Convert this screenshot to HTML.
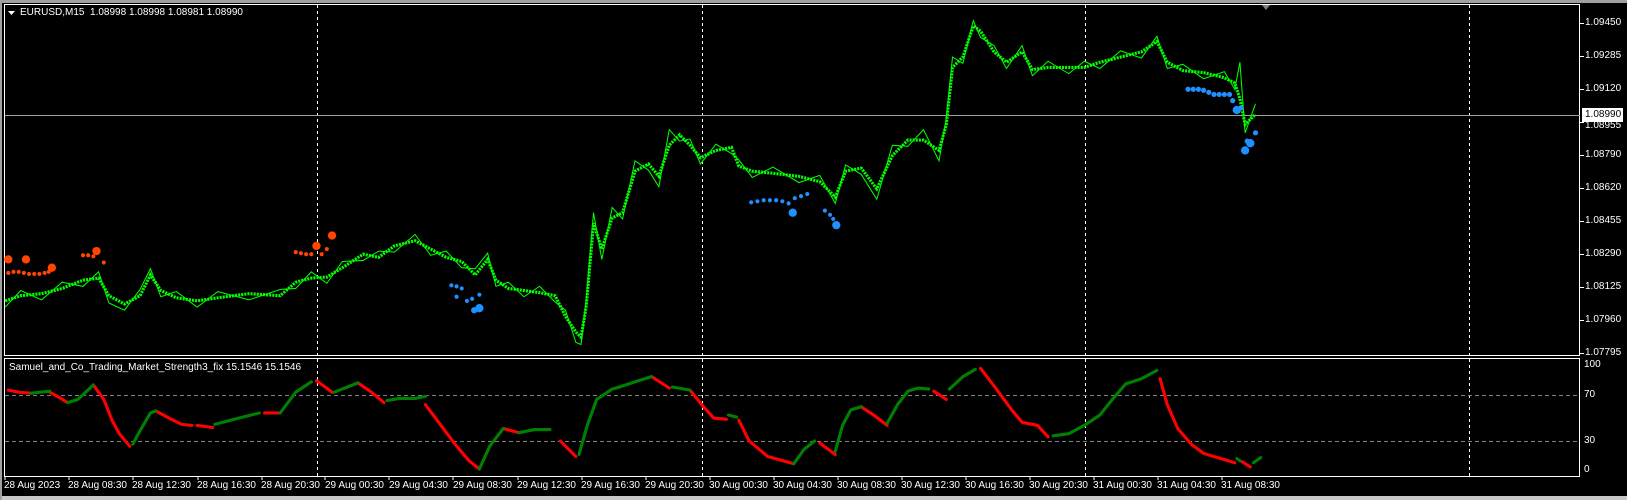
<!DOCTYPE html>
<html><head><meta charset="utf-8"><style>
html,body{margin:0;padding:0;background:#000;width:1627px;height:500px;overflow:hidden;position:relative;font-family:"Liberation Sans",Arial,sans-serif;font-size:10px;color:#fff}
.t{position:absolute;white-space:nowrap;line-height:12px}
svg{position:absolute;left:0;top:0}
</style></head><body>
<svg width="1627" height="500" viewBox="0 0 1627 500">
<rect x="0" y="0" width="1627" height="3" fill="#a0a0a0"/>
<rect x="0" y="496" width="1627" height="4" fill="#c8c8c8"/>
<rect x="0" y="0" width="2" height="500" fill="#a0a0a0"/>
<rect x="4.5" y="4.5" width="1575" height="351" fill="none" stroke="#fff" stroke-width="1"/>
<rect x="4.5" y="358.5" width="1575" height="118" fill="none" stroke="#fff" stroke-width="1"/>
<g stroke="#fff" stroke-dasharray="3,3" stroke-width="1">
<line x1="317.5" y1="5" x2="317.5" y2="476"/><line x1="702.5" y1="5" x2="702.5" y2="476"/>
<line x1="1085.5" y1="5" x2="1085.5" y2="476"/><line x1="1469.5" y1="5" x2="1469.5" y2="476"/>
</g>
<g stroke="#808080" stroke-dasharray="4,3">
<line x1="5" y1="395.5" x2="1579" y2="395.5"/><line x1="5" y1="441.5" x2="1579" y2="441.5"/>
</g>
<line x1="5" y1="115.5" x2="1580" y2="115.5" stroke="#a0a0a0"/>
<g stroke="#fff"><line x1="1580" y1="23.5" x2="1584" y2="23.5"/><line x1="1580" y1="56.5" x2="1584" y2="56.5"/><line x1="1580" y1="89.5" x2="1584" y2="89.5"/><line x1="1580" y1="122.5" x2="1584" y2="122.5"/><line x1="1580" y1="155.5" x2="1584" y2="155.5"/><line x1="1580" y1="188.5" x2="1584" y2="188.5"/><line x1="1580" y1="221.5" x2="1584" y2="221.5"/><line x1="1580" y1="254.5" x2="1584" y2="254.5"/><line x1="1580" y1="287.5" x2="1584" y2="287.5"/><line x1="1580" y1="320.5" x2="1584" y2="320.5"/><line x1="1580" y1="353.5" x2="1584" y2="353.5"/></g>
<polygon points="1262,5 1270,5 1266,10" fill="#808080"/>
<g transform="scale(1.0376)">
<polyline fill="none" stroke="#00ff00" stroke-width="3" stroke-dasharray="2,1" points="5,290 20,285 40,283 60,278 80,270 95,268 105,285 120,293 135,285 145,265 155,280 170,287 190,290 210,287 240,283 270,285 285,272 300,268 315,267 330,258 350,245 365,248 380,237 400,232 415,240 430,248 445,252 458,265 470,250 478,270 490,278 505,280 520,282 535,285 545,305 555,320 560,325 565,295 572,215 580,240 590,210 600,205 612,165 625,158 635,170 645,140 655,130 665,140 675,152 690,145 705,142 712,160 725,165 745,167 770,170 790,175 805,190 815,165 830,162 845,182 860,150 875,135 890,135 905,145 912,120 918,65 928,55 938,25 945,30 958,50 970,60 985,50 995,67 1010,65 1030,65 1045,65 1060,60 1080,55 1100,50 1115,40 1125,60 1140,68 1160,70 1180,75 1190,80 1195,95 1200,120 1210,110"/>
<polyline fill="none" stroke="#00ff00" stroke-width="1" points="5,296 20,280 40,289 60,272 80,276 95,262 105,292 120,299 135,279 145,259 155,286 170,281 190,296 210,281 240,289 270,279 285,278 300,262 315,273 330,252 350,251 365,242 380,243 400,226 415,246 430,242 445,258 458,259 470,244 478,276 490,272 505,286 520,276 535,291 545,299 555,330 560,332 565,289 572,205 580,250 590,200 600,211 612,155 625,164 635,180 645,125 655,136 665,134 675,158 690,139 705,148 712,154 725,171 745,161 770,176 790,169 805,196 815,159 830,168 845,192 860,140 875,141 890,125 905,155 912,114 918,55 928,61 938,20 945,36 958,44 970,66 985,44 995,73 1010,59 1030,71 1045,59 1060,66 1080,49 1100,56 1115,35 1125,66 1140,62 1160,76 1180,69 1190,86 1195,60 1200,128 1210,100"/>
<g fill="#ff4500">
<circle cx="8" cy="250" r="4"/><circle cx="25" cy="250" r="4"/><circle cx="50" cy="258" r="4"/><circle cx="93" cy="242" r="4"/><circle cx="305" cy="237" r="4"/><circle cx="320" cy="227" r="4"/>
<circle cx="8" cy="263" r="2"/><circle cx="13" cy="262" r="2"/><circle cx="18" cy="262" r="2"/><circle cx="23" cy="263" r="2"/><circle cx="28" cy="264" r="2"/><circle cx="33" cy="264" r="2"/><circle cx="38" cy="264" r="2"/><circle cx="43" cy="263" r="2"/><circle cx="47" cy="262" r="2"/>
<circle cx="80" cy="246" r="2"/><circle cx="85" cy="246" r="2"/><circle cx="90" cy="247" r="2"/><circle cx="100" cy="253" r="2"/>
<circle cx="285" cy="243" r="2"/><circle cx="290" cy="244" r="2"/><circle cx="295" cy="245" r="2"/><circle cx="300" cy="245" r="2"/><circle cx="310" cy="245" r="2"/><circle cx="315" cy="240" r="2"/>
</g>
<g fill="#1e90ff">
<circle cx="435" cy="275" r="2"/><circle cx="440" cy="276" r="2"/><circle cx="445" cy="278" r="2"/><circle cx="440" cy="286" r="2"/><circle cx="450" cy="290" r="2"/><circle cx="455" cy="288" r="2"/><circle cx="462" cy="284" r="2"/><circle cx="457" cy="299" r="3"/><circle cx="462" cy="297" r="4"/>
<circle cx="724" cy="195" r="2"/><circle cx="730" cy="194" r="2"/><circle cx="736" cy="193" r="2"/><circle cx="742" cy="193" r="2"/><circle cx="748" cy="193" r="2"/><circle cx="754" cy="194" r="2"/><circle cx="760" cy="196" r="2"/><circle cx="766" cy="191" r="2"/><circle cx="772" cy="189" r="2"/><circle cx="778" cy="187" r="2"/><circle cx="764" cy="205" r="4"/>
<circle cx="795" cy="203" r="2"/><circle cx="800" cy="207" r="2"/><circle cx="803" cy="211" r="2"/><circle cx="806" cy="217" r="4"/>
<circle cx="1145" cy="86" r="2.5"/><circle cx="1150" cy="86" r="2.5"/><circle cx="1155" cy="86" r="2.5"/><circle cx="1160" cy="87" r="2.5"/><circle cx="1165" cy="89" r="2.5"/><circle cx="1170" cy="91" r="2.5"/><circle cx="1175" cy="91" r="2.5"/><circle cx="1180" cy="91" r="2.5"/><circle cx="1185" cy="91" r="2.5"/><circle cx="1188" cy="97" r="2.5"/><circle cx="1192" cy="106" r="4"/><circle cx="1196" cy="104" r="2.5"/>
<circle cx="1200" cy="145" r="4"/><circle cx="1205" cy="138" r="4"/><circle cx="1210" cy="128" r="2.5"/><circle cx="1202" cy="136" r="2.5"/>
</g>
<g fill="none" stroke-width="3" stroke-linecap="round" stroke-linejoin="round">
<g stroke="#ff0000">
<polyline points="8,376 18,378 30,379"/><polyline points="48,378 57,383 65,388"/><polyline points="90,371 100,385 108,405 115,418 125,430"/><polyline points="150,396 165,404 175,409 185,410"/><polyline points="190,410 205,412"/><polyline points="255,398 268,398"/><polyline points="305,367 312,372 320,378"/><polyline points="345,369 358,378 370,388"/><polyline points="410,390 425,410 440,430 452,444 462,452"/><polyline points="485,413 500,417"/><polyline points="540,425 555,440"/><polyline points="628,363 645,374"/><polyline points="665,376 678,392 688,403 700,404"/><polyline points="712,405 722,425 740,440 765,447"/><polyline points="790,427 805,438"/><polyline points="830,392 842,400 855,410"/><polyline points="900,377 912,385"/><polyline points="945,355 958,372 975,395 985,407 1000,410 1010,421"/><polyline points="1118,365 1125,390 1135,413 1148,428 1160,437 1180,443 1190,446"/><polyline points="1197,445 1205,450"/>
</g>
<g stroke="#008000">
<polyline points="30,379 48,377"/><polyline points="65,388 75,385 90,371"/><polyline points="128,428 135,415 145,398 150,396"/><polyline points="207,409 230,403 250,398"/><polyline points="270,398 285,378 300,368"/><polyline points="322,378 345,369"/><polyline points="373,386 385,384 400,384 410,382"/><polyline points="462,452 472,430 485,413"/><polyline points="500,417 515,414 530,414"/><polyline points="558,438 566,410 575,385 590,375 600,372 615,367 628,363"/><polyline points="648,373 665,376"/><polyline points="702,400 710,402"/><polyline points="765,447 775,433 785,425"/><polyline points="805,435 812,410 820,395 830,392"/><polyline points="855,408 865,390 875,377 885,374 895,375"/><polyline points="915,375 928,363 940,356"/><polyline points="1015,420 1030,418 1045,410 1060,400 1072,385 1085,370 1100,365 1115,357"/><polyline points="1192,442 1195,444"/><polyline points="1208,446 1215,441"/>
</g></g>
</g>
<rect x="1582" y="108" width="41" height="14" fill="#fff"/>
<g stroke="#fff">
<line x1="5" y1="476" x2="5" y2="480"/><line x1="69" y1="476" x2="69" y2="480"/><line x1="133" y1="476" x2="133" y2="480"/><line x1="198" y1="476" x2="198" y2="480"/><line x1="262" y1="476" x2="262" y2="480"/><line x1="325" y1="476" x2="325" y2="480"/><line x1="389" y1="476" x2="389" y2="480"/><line x1="453" y1="476" x2="453" y2="480"/><line x1="518" y1="476" x2="518" y2="480"/><line x1="582" y1="476" x2="582" y2="480"/><line x1="646" y1="476" x2="646" y2="480"/><line x1="710" y1="476" x2="710" y2="480"/><line x1="774" y1="476" x2="774" y2="480"/><line x1="838" y1="476" x2="838" y2="480"/><line x1="902" y1="476" x2="902" y2="480"/><line x1="966" y1="476" x2="966" y2="480"/><line x1="1030" y1="476" x2="1030" y2="480"/><line x1="1094" y1="476" x2="1094" y2="480"/><line x1="1158" y1="476" x2="1158" y2="480"/><line x1="1222" y1="476" x2="1222" y2="480"/>
</g>
<polygon points="8,11 15,11 11.5,15" fill="#fff"/>
</svg>
<div class="t" style="left:20px;top:7px">EURUSD,M15&nbsp; 1.08998 1.08998 1.08981 1.08990</div>
<div class="t" style="left:9px;top:362px">Samuel_and_Co_Trading_Market_Strength3_fix 15.1546 15.1546</div>
<div class="t" style="left:1585px;top:17px">1.09450</div>
<div class="t" style="left:1585px;top:50px">1.09285</div>
<div class="t" style="left:1585px;top:83px">1.09120</div>
<div class="t" style="left:1585px;top:120px">1.08955</div>
<div class="t" style="left:1585px;top:109px;color:#000">1.08990</div>
<div class="t" style="left:1585px;top:149px">1.08790</div>
<div class="t" style="left:1585px;top:182px">1.08620</div>
<div class="t" style="left:1585px;top:215px">1.08455</div>
<div class="t" style="left:1585px;top:248px">1.08290</div>
<div class="t" style="left:1585px;top:281px">1.08125</div>
<div class="t" style="left:1585px;top:314px">1.07960</div>
<div class="t" style="left:1585px;top:347px">1.07795</div>
<div class="t" style="left:1584px;top:359px">100</div>
<div class="t" style="left:1584px;top:389px">70</div>
<div class="t" style="left:1584px;top:435px">30</div>
<div class="t" style="left:1584px;top:464px">0</div>
<div class="t" style="left:4px;top:480px">28 Aug 2023</div>
<div class="t" style="left:68px;top:480px">28 Aug 08:30</div>
<div class="t" style="left:132px;top:480px">28 Aug 12:30</div>
<div class="t" style="left:197px;top:480px">28 Aug 16:30</div>
<div class="t" style="left:261px;top:480px">28 Aug 20:30</div>
<div class="t" style="left:325px;top:480px">29 Aug 00:30</div>
<div class="t" style="left:389px;top:480px">29 Aug 04:30</div>
<div class="t" style="left:453px;top:480px">29 Aug 08:30</div>
<div class="t" style="left:517px;top:480px">29 Aug 12:30</div>
<div class="t" style="left:581px;top:480px">29 Aug 16:30</div>
<div class="t" style="left:645px;top:480px">29 Aug 20:30</div>
<div class="t" style="left:709px;top:480px">30 Aug 00:30</div>
<div class="t" style="left:773px;top:480px">30 Aug 04:30</div>
<div class="t" style="left:837px;top:480px">30 Aug 08:30</div>
<div class="t" style="left:901px;top:480px">30 Aug 12:30</div>
<div class="t" style="left:965px;top:480px">30 Aug 16:30</div>
<div class="t" style="left:1029px;top:480px">30 Aug 20:30</div>
<div class="t" style="left:1093px;top:480px">31 Aug 00:30</div>
<div class="t" style="left:1157px;top:480px">31 Aug 04:30</div>
<div class="t" style="left:1221px;top:480px">31 Aug 08:30</div>
</body></html>
